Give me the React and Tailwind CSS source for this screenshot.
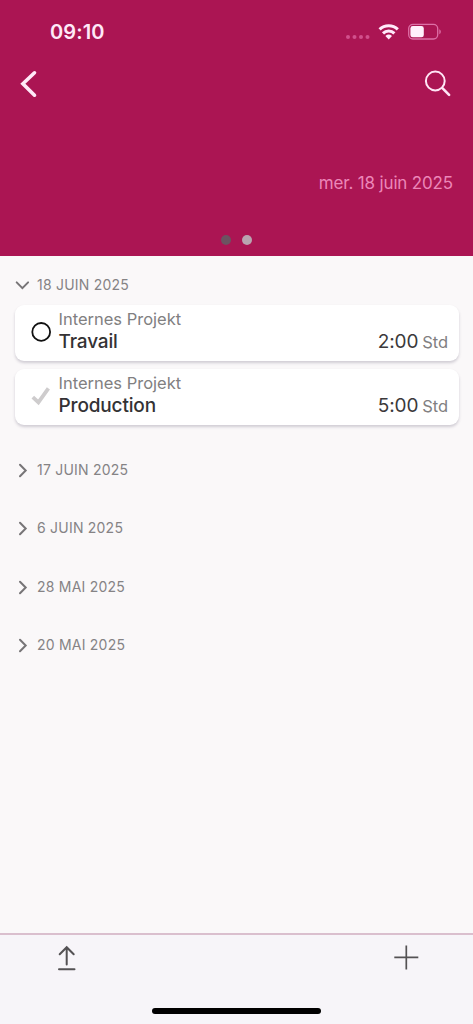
import React from 'react';

const entries = [
  { project: 'Internes Projekt', task: 'Travail', hours: '2:00', done: false },
  { project: 'Internes Projekt', task: 'Production', hours: '5:00', done: true },
];

const closedDays = ['17 JUIN 2025', '6 JUIN 2025', '28 MAI 2025', '20 MAI 2025'];

const StatusBar = () => (
  <div className="flex h-[63px] items-center justify-between pl-[50px] pr-[31px]">
    <span className="text-[20px] font-semibold leading-6 tracking-[0.1px] text-[#ffe9f8]">09:10</span>
    <svg width="98" height="20" viewBox="0 0 98 20" className="block" fill="none">
      <g fill="#d1508c">
        <circle cx="4" cy="15" r="2" />
        <circle cx="10.5" cy="15" r="2" />
        <circle cx="17" cy="15" r="2" />
        <circle cx="23.5" cy="15" r="2" />
      </g>
      <g stroke="#ffeafa" strokeWidth="3.1">
        <path d="M35.6 7.4a13 13 0 0 1 18.2 0" />
        <path d="M39 11.3a8.2 8.2 0 0 1 11.4 0" />
      </g>
      <path d="M41.4 14a5 5 0 0 1 6.6 0L44.7 17.5z" fill="#ffeafa" />
      <rect x="64.7" y="2.4" width="29" height="14.6" rx="4.2" stroke="#dd6fa6" strokeWidth="1.3" />
      <rect x="66.4" y="4.1" width="13.4" height="11.2" rx="2.4" fill="#fff0fc" />
      <path d="M95.3 7.2c2 .8 2 4.2 0 5z" fill="#dd6fa6" />
    </svg>
  </div>
);

const Header = () => (
  <header className="flex h-[256px] flex-col bg-[#ab1553]">
    <StatusBar />
    <div className="flex h-[42px] items-center justify-between pl-[18px] pr-[20px]">
      <svg width="22" height="32" viewBox="0 0 22 32" fill="none" stroke="#ffe9f8" strokeWidth="3.6" strokeLinecap="round">
        <path d="M16.5 4.8 4.9 15.8l11.6 11.4" strokeLinejoin="miter" />
      </svg>
      <svg width="30" height="30" viewBox="0 0 30 30" fill="none" stroke="#ffe6f6" strokeLinecap="round">
        <circle cx="12.3" cy="12" r="9.4" strokeWidth="2" />
        <path d="m19.4 19.2 6.7 6.7" strokeWidth="2.6" />
      </svg>
    </div>
    <div className="mt-[66px] flex h-6 items-center justify-end pr-[20px]">
      <span className="text-[17px] leading-6 tracking-[-0.16px] text-[#ec86b8]">mer. 18 juin 2025</span>
    </div>
    <div className="mt-[40.4px] flex justify-center gap-[11px]">
      <span className="size-[10px] rounded-full bg-[#6c5361]" />
      <span className="size-[10px] rounded-full bg-[#b9a4b0]" />
    </div>
  </header>
);

const DayHeading = ({ label, open = false }) => (
  <div className="flex h-6 items-center pl-[15px]">
    <svg width="16" height="16" viewBox="0 0 16 16" fill="none" stroke="#777577" strokeWidth="2" strokeLinecap="round">
      <path d={open ? 'M1.7 5.4 7.4 11.1l5.7-5.7' : 'm5 2.7 5.7 5.8L5 14.3'} />
    </svg>
    <span className="ml-[6px] text-[14px] leading-6 tracking-[0.22px] text-[#858385]">{label}</span>
  </div>
);

const EntryCard = ({ entry }) => (
  <div className="flex h-[56px] items-center rounded-[9px] bg-white pr-[11px] pl-4 shadow-[0_2px_3px_rgba(60,50,80,0.22)]">
    <svg width="20" height="22" viewBox="0 0 20 22" fill="none">
      {entry.done ? (
        <path d="m1.8 11.2 5.6 5.1L17.4 2.4" stroke="#cecccd" strokeWidth="3.8" />
      ) : (
        <circle cx="10.2" cy="9.9" r="8.9" stroke="#111" strokeWidth="1.8" />
      )}
    </svg>
    <div className="ml-[7.5px] flex flex-1 flex-col pb-[4px]">
      <span className="text-[16.5px] leading-[22px] text-[#818081]">{entry.project}</span>
      <div className="flex items-baseline justify-between leading-[23px]">
        <span className="text-[19px] font-medium tracking-[-0.15px] text-[#343234]">{entry.task}</span>
        <span className="text-[19px] tracking-[-0.1px] text-[#3b393b]">
          {entry.hours}
          <span className="ml-[4px] text-[16.5px] text-[#818081]">Std</span>
        </span>
      </div>
    </div>
  </div>
);

const BottomBar = () => (
  <footer className="flex h-[91px] flex-col items-center justify-between border-t-2 border-[#dabfce] bg-[#f7f5f9] pb-[10px]">
    <div className="flex w-full justify-between pt-[8px] pr-[52px] pl-[54px]">
      <svg width="26" height="30" viewBox="0 0 26 30" fill="none" stroke="#545254" strokeWidth="2" strokeLinecap="round">
        <path d="M12.7 21.5V4.5M5.7 11.2l7-7 7 7M5 26.2h15.5" />
      </svg>
      <svg width="30" height="30" viewBox="0 0 30 30" fill="none" stroke="#545254" strokeWidth="1.7">
        <path d="M15.3 2.5v24M3.3 14.3h24" />
      </svg>
    </div>
    <div className="h-[6px] w-[169px] rounded-full bg-black" />
  </footer>
);

export default function App() {
  return (
    <div className="flex h-[1024px] w-[473px] flex-col overflow-hidden bg-[#faf8f9] font-['Inter','Liberation_Sans',sans-serif]">
      <Header />
      <main className="flex-1 pt-[17px]">
        <DayHeading label="18 JUIN 2025" open />
        <div className="mt-[8px] flex flex-col gap-[7.5px] pr-[14px] pl-[15px]">
          {entries.map((entry) => (
            <EntryCard key={entry.task} entry={entry} />
          ))}
        </div>
        <div className="mt-[33.5px] flex flex-col gap-[34.3px]">
          {closedDays.map((day) => (
            <DayHeading key={day} label={day} />
          ))}
        </div>
      </main>
      <BottomBar />
    </div>
  );
}
